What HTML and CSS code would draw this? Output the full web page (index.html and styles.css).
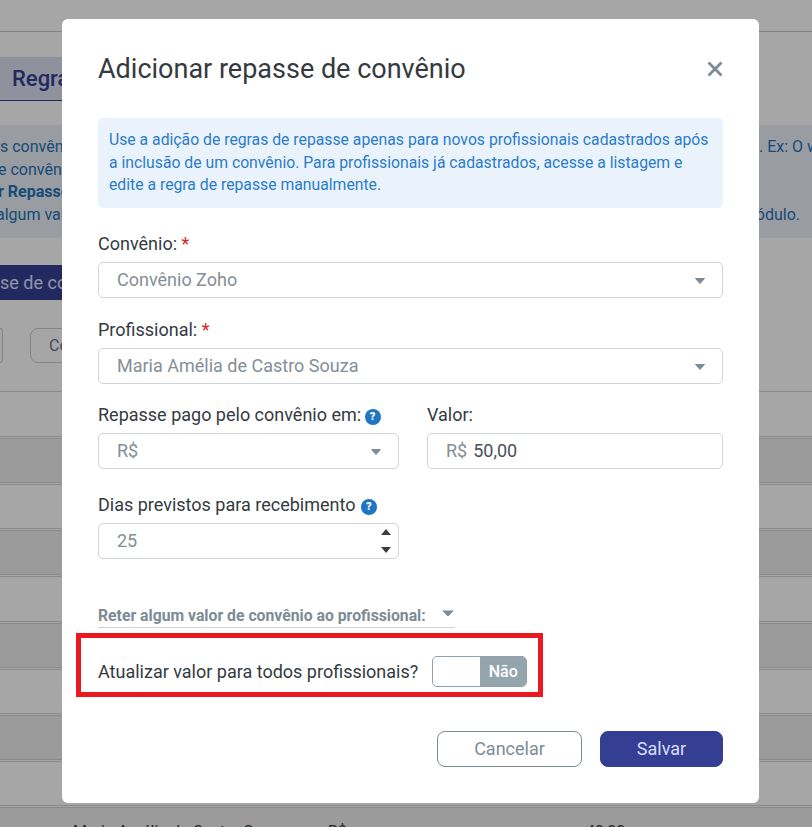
FILE: index.html
```html
<!DOCTYPE html>
<html lang="en">
<head>
    <meta charset="UTF-8">
    <meta name="viewport" content="width=device-width, initial-scale=1.0">
    <title>Adicionar repasse de convênio</title>
    <link rel="stylesheet" href="styles.css">
</head>
<body>
    <div class="page">
        <div class="tabs">
            <div class="tab">Regras de repasse</div>
        </div>
        <div class="notice">
            <p><span>s convênios</span><span>. Ex: O w</span></p>
            <p><span>e convênios</span></p>
            <p><b>r Repasse</b></p>
            <p><span>algum valor</span><span>ódulo.</span></p>
        </div>
        <div class="add-bar">se de convênio</div>
        <div class="filters">
            <div class="filter first"></div>
            <div class="filter">Convênio</div>
        </div>
        <div class="table">
            <div class="row"></div>
            <div class="row"></div>
            <div class="row"></div>
            <div class="row"></div>
            <div class="row"></div>
            <div class="row"></div>
            <div class="row"></div>
            <div class="row"></div>
            <div class="row"></div>
            <div class="row text-row">
                <span class="cell-name">Maria Amélia de Castro Souza</span>
                <span class="cell-type">R$</span>
                <span>40,00</span>
            </div>
        </div>
    </div>

    <div class="backdrop">
        <div class="modal">
            <div class="modal-head">
                <h1>Adicionar repasse de convênio</h1>
                <svg class="close" width="16" height="16" viewBox="0 0 16 16">
                    <path d="M1.5 1.5 L14.5 14.5 M14.5 1.5 L1.5 14.5" stroke="#7d8b95" stroke-width="2.8" fill="none"/>
                </svg>
            </div>

            <div class="info">
                Use a adição de regras de repasse apenas para novos profissionais cadastrados após
                a inclusão de um convênio. Para profissionais já cadastrados, acesse a listagem e
                edite a regra de repasse manualmente.
            </div>

            <div class="field conv">
                <label>Convênio: <em>*</em></label>
                <div class="input select">
                    <span>Convênio Zoho</span>
                    <svg class="caret" width="10" height="6" viewBox="0 0 10 6"><path d="M0.5 0.5 H9.5 L5 5.5 Z" fill="#7d8b95" stroke="#7d8b95" stroke-linejoin="round"/></svg>
                </div>
            </div>

            <div class="field prof">
                <label>Profissional: <em>*</em></label>
                <div class="input select">
                    <span>Maria Amélia de Castro Souza</span>
                    <svg class="caret" width="10" height="6" viewBox="0 0 10 6"><path d="M0.5 0.5 H9.5 L5 5.5 Z" fill="#7d8b95" stroke="#7d8b95" stroke-linejoin="round"/></svg>
                </div>
            </div>

            <div class="two-cols">
                <div class="field col-type">
                    <label>Repasse pago pelo convênio em: <i class="help">?</i></label>
                    <div class="input select">
                        <span>R$</span>
                        <svg class="caret" width="10" height="6" viewBox="0 0 10 6"><path d="M0.5 0.5 H9.5 L5 5.5 Z" fill="#7d8b95" stroke="#7d8b95" stroke-linejoin="round"/></svg>
                    </div>
                </div>
                <div class="field col-value">
                    <label>Valor:</label>
                    <div class="input money"><span>R$</span> <b>50,00</b></div>
                </div>
            </div>

            <div class="field days">
                <label>Dias previstos para recebimento <i class="help">?</i></label>
                <div class="input number">
                    <span>25</span>
                    <div class="spin">
                        <svg width="10" height="6" viewBox="0 0 10 6"><path d="M5 0 L10 6 H0 Z" fill="#3d3d3d"/></svg>
                        <svg width="10" height="6" viewBox="0 0 10 6"><path d="M0 0 H10 L5 6 Z" fill="#3d3d3d"/></svg>
                    </div>
                </div>
            </div>

            <div class="retain">
                <span>Reter algum valor de convênio ao profissional:</span>
                <svg width="12" height="7" viewBox="0 0 12 7"><path d="M1 1 H11 L6 6 Z" fill="#7d8b95" stroke="#7d8b95" stroke-linejoin="round"/></svg>
            </div>

            <div class="highlight">
                <span>Atualizar valor para todos profissionais?</span>
                <div class="toggle">
                    <div class="toggle-off"></div>
                    <div class="toggle-label">Não</div>
                </div>
            </div>

            <div class="actions">
                <button class="btn cancel">Cancelar</button>
                <button class="btn save">Salvar</button>
            </div>
        </div>
    </div>
</body>
</html>
```

FILE: styles.css
```css
html, body {
    margin: 0;
    height: 827px;
    overflow: hidden;
}

body {
    position: relative;
    background: #fff;
    font-family: 'Roboto', 'Liberation Sans', sans-serif;
    font-size: 16px;
    color: #343a40;
}

/* Page behind the modal */
.page {
    height: 827px;
    overflow: hidden;
}

.tabs {
    height: 69px;
    margin-top: 31px;
    padding-top: 25px;
    box-sizing: border-box;
    border-top: 1px solid #c5cace;
}

.tab {
    width: 220px;
    height: 44px;
    padding-left: 12px;
    box-sizing: border-box;
    background: #dcdff0;
    border-bottom: 1px solid #343f94;
    color: #343f94;
    font-size: 22px;
    font-weight: 500;
    line-height: 43px;
}

.notice {
    height: 113px;
    margin-top: 25px;
    padding-top: 11px;
    box-sizing: border-box;
    background: #ecf0f8;
    color: #2473b8;
}

.notice p {
    display: flex;
    justify-content: space-between;
    margin: 0 0 0 -2px;
    height: 22.5px;
    line-height: 22.5px;
    white-space: nowrap;
}

.notice p:first-child {
    margin-left: 0;
}

.notice p:last-child {
    margin-left: -4px;
}

.notice p:last-child span:last-child {
    margin-right: 12px;
}

.notice p:first-child span:last-child {
    margin-right: -7px;
}

.add-bar {
    width: 220px;
    height: 35px;
    margin-top: 27px;
    background: #343f94;
    color: #dfe3ff;
    font-size: 18px;
    line-height: 35px;
    white-space: nowrap;
}

.filters {
    display: flex;
    gap: 27px;
    height: 35px;
    margin-top: 28px;
}

.filter {
    width: 100px;
    box-sizing: border-box;
    padding-left: 18px;
    border: 1px solid #c9ced2;
    border-radius: 8px;
    color: #68737c;
    line-height: 33px;
}

.filter.first {
    width: 3px;
    border-left: 0;
    border-radius: 0 8px 8px 0;
    padding: 0;
}

.table {
    margin-top: 28px;
}

.row {
    height: 45.15px;
    margin-bottom: 1px;
    box-sizing: border-box;
    border-top: 1px solid #d2d4d6;
    border-bottom: 1px solid #d2d4d6;
    background: #fff;
}

.row:nth-child(even) {
    background: #eeeeee;
}

.row:first-child {
    height: 46px;
}

.text-row {
    display: flex;
    padding: 14px 0 0 73px;
    height: 46px;
    color: #343a40;
    white-space: nowrap;
}

.cell-name {
    width: 255px;
}

.cell-type {
    width: 258px;
}

.backdrop {
    position: absolute;
    top: 0;
    left: 0;
    width: 812px;
    height: 827px;
    background: rgba(0, 0, 0, 0.35);
}

/* Modal */
.modal {
    width: 697px;
    height: 784px;
    margin: 19px 0 0 62px;
    padding: 0 36px;
    box-sizing: border-box;
    background: #fff;
    border-radius: 6px;
}

.modal-head {
    display: flex;
    justify-content: space-between;
    align-items: center;
    height: 99px;
}

.modal-head h1 {
    margin: 0;
    font-size: 27px;
    font-weight: 400;
    color: #343a40;
}

.info {
    height: 90px;
    padding: 11px 11px 0;
    box-sizing: border-box;
    background: #eaf3fc;
    border-radius: 5px;
    color: #2b7cc9;
    font-size: 15.75px;
    line-height: 22.5px;
}

.field label {
    display: block;
    height: 17px;
    margin-bottom: 10px;
    font-size: 18px;
    line-height: 17px;
    white-space: nowrap;
}

.field em {
    color: #d9232a;
    font-style: normal;
}

.conv {
    margin-top: 27px;
}

.prof {
    margin-top: 23px;
}

.input {
    display: flex;
    align-items: center;
    height: 36px;
    box-sizing: border-box;
    padding: 0 18px 2px;
    border: 1px solid #ced4da;
    border-radius: 5px;
    color: #868e96;
    font-size: 18px;
}

.select {
    justify-content: space-between;
    padding-right: 17px;
}

.caret {
    margin-top: 3px;
}

.two-cols {
    display: flex;
    gap: 28px;
    margin-top: 22px;
}

.col-type {
    width: 301px;
}

.col-value {
    width: 296px;
}

.money b {
    margin-left: 6px;
    font-weight: 400;
    color: #495057;
}

.help {
    display: inline-block;
    width: 16px;
    height: 16px;
    margin-left: 1px;
    border-radius: 50%;
    background: #1f77c4;
    color: #fff;
    font-size: 11px;
    font-weight: 900;
    font-style: normal;
    line-height: 16px;
    text-align: center;
    vertical-align: 1px;
}

.col-type .help {
    margin-left: -1px;
}

.days {
    margin-top: 27px;
    width: 301px;
}

.number {
    justify-content: space-between;
    padding-right: 7px;
}

.spin {
    display: flex;
    flex-direction: column;
    gap: 12px;
    margin-top: 2px;
}

.spin svg {
    display: block;
}

.retain {
    display: flex;
    justify-content: space-between;
    align-items: center;
    width: 357px;
    height: 25px;
    margin-top: 44px;
    box-sizing: border-box;
    border-bottom: 1px solid #ced4da;
    color: #7d8b95;
    font-size: 15.75px;
    font-weight: 700;
    white-space: nowrap;
}

.retain svg {
    margin: 0 1px 3px 0;
}

.highlight {
    display: flex;
    align-items: center;
    gap: 14px;
    width: 467px;
    height: 64px;
    margin: 5px 0 0 -22px;
    padding: 12px 0 0 17px;
    box-sizing: border-box;
    border: 5px solid #e8191f;
    font-size: 18px;
    white-space: nowrap;
}

.toggle {
    display: flex;
    width: 95px;
    height: 31px;
    box-sizing: border-box;
    border: 1px solid #8fa1ab;
    border-radius: 5px;
    overflow: hidden;
}

.toggle-off {
    width: 47px;
}

.toggle-label {
    flex: 1;
    background: #94a5ae;
    color: #fff;
    font-size: 16px;
    font-weight: 500;
    line-height: 29px;
    text-align: center;
}

.actions {
    display: flex;
    justify-content: flex-end;
    gap: 18px;
    margin-top: 34px;
}

.btn {
    height: 36px;
    box-sizing: border-box;
    padding-bottom: 2px;
    border-radius: 8px;
    font-family: inherit;
    font-size: 18px;
}

.cancel {
    width: 145px;
    background: #fff;
    border: 1px solid #7d8b95;
    color: #7d8b95;
}

.save {
    width: 123px;
    background: #343f94;
    border: 1px solid #343f94;
    color: #d9deff;
}
```
